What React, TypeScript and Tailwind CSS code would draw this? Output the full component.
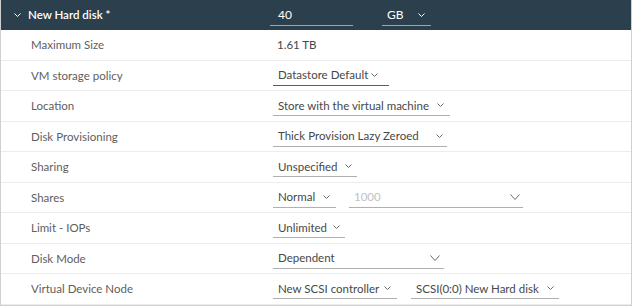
import React from 'react';

function Chevron({ big = false, light = false }: { big?: boolean; light?: boolean }) {
  const w = big ? 10 : 7;
  const h = big ? 6 : 4;
  return (
    <svg width={w} height={h} viewBox={`0 0 ${w} ${h}`} className="shrink-0">
      <polyline
        points={`0.5,0.5 ${w / 2},${h - 0.5} ${w - 0.5},0.5`}
        fill="none"
        stroke={light ? '#ffffff' : '#6b6b6b'}
        strokeWidth="1"
      />
    </svg>
  );
}

type SelectProps = {
  text: string;
  w: number;
  pr?: number;
  big?: boolean;
  disabled?: boolean;
  dark?: boolean;
};

function Select({ text, w, pr = 5, big = false, disabled = false, dark = false }: SelectProps) {
  return (
    <div
      className={`flex h-[21px] items-center justify-between whitespace-nowrap pl-[5px] border-b ${dark ? 'border-[#5c5c5c]' : 'border-[#b0b0b0]'}`}
      style={{ width: w, paddingRight: pr }}
    >
      <span className={disabled ? 'text-[#c2c2c2]' : 'text-[#474747]'}>{text}</span>
      <Chevron big={big} />
    </div>
  );
}

function Row({ label, children }: { label: string; children: React.ReactNode }) {
  return (
    <div className="flex h-[30.5px] items-center border-b border-[#ececec]">
      <div className="w-[272px] pl-[30px] whitespace-nowrap text-[#5e5e5e]">{label}</div>
      <div className="flex items-center">{children}</div>
    </div>
  );
}

export default function App() {
  return (
    <div className="w-[632px] h-[306px] bg-white font-['Lato',sans-serif] text-[11.5px]">
      <div className="border-x border-b border-[#d0d0d0]">
        {/* header */}
        <div className="flex h-[30px] items-center bg-[#2c3f4d] text-white">
          <div className="flex w-[269px] items-center pl-[13px] gap-[7px]">
            <Chevron light />
            <span className="font-semibold text-[11.5px]">New Hard disk *</span>
          </div>
          <div className="flex h-[21px] w-[83px] items-center border-b border-[#9aa6ae] pl-[8px] text-[12px]">40</div>
          <div className="ml-[29px] flex h-[21px] w-[49px] items-center justify-between border-b border-[#9aa6ae] pl-[5px] pr-[6px] text-[12px]">
            <span>GB</span>
            <Chevron light />
          </div>
        </div>

        <Row label="Maximum Size">
          <span className="pl-[4px] text-[#474747]">1.61 TB</span>
        </Row>
        <Row label="VM storage policy">
          <Select text="Datastore Default" w={116} pr={11} dark />
        </Row>
        <Row label="Location">
          <Select text="Store with the virtual machine" w={177} pr={6} />
        </Row>
        <Row label="Disk Provisioning">
          <Select text="Thick Provision Lazy Zeroed" w={174} pr={4} />
        </Row>
        <Row label="Sharing">
          <Select text="Unspecified" w={84} pr={5} />
        </Row>
        <Row label="Shares">
          <div className="flex items-center gap-[13px]">
            <Select text="Normal" w={63} pr={6} />
            <Select text="1000" w={174} pr={3} big disabled />
          </div>
        </Row>
        <Row label="Limit - IOPs">
          <Select text="Unlimited" w={72} pr={5} />
        </Row>
        <Row label="Disk Mode">
          <Select text="Dependent" w={171} pr={4} big />
        </Row>
        <Row label="Virtual Device Node">
          <div className="flex items-center gap-[14px]">
            <Select text="New SCSI controller" w={124} pr={6} />
            <Select text="SCSI(0:0) New Hard disk" w={148} pr={5} />
          </div>
        </Row>
      </div>
    </div>
  );
}
